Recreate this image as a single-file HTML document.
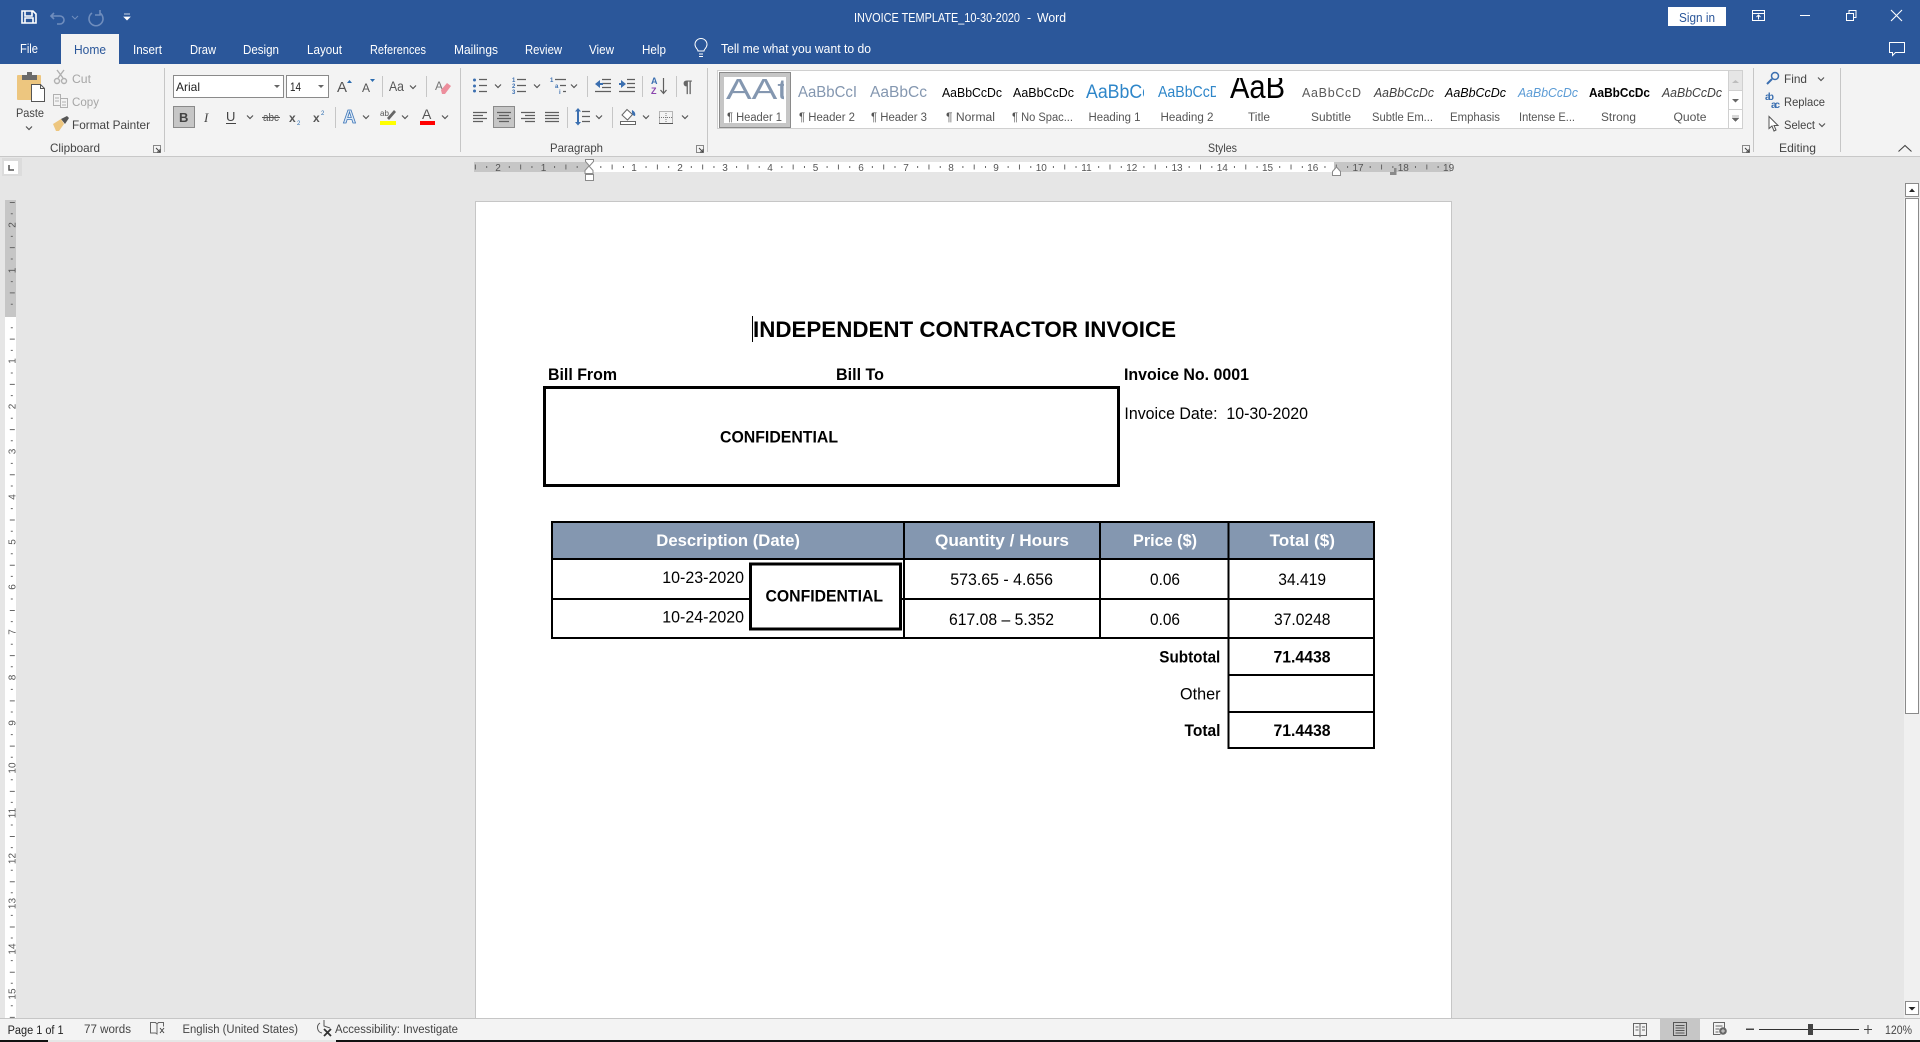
<!DOCTYPE html>
<html lang="en"><head><meta charset="utf-8"><title>INVOICE TEMPLATE_10-30-2020 - Word</title>
<style>
html,body{margin:0;padding:0;background:#e6e6e6;overflow:hidden}
svg{display:block;font-family:"Liberation Sans",sans-serif}
.r{font-size:12px;fill:#444}
.tab{font-size:12.5px;fill:#fff}
.lab{font-size:12px;fill:#444}
.dim{font-size:12px;fill:#a6a6a6}
.st{font-size:11.5px;fill:#555}
.rn{font-size:10px;fill:#555}
.sb{font-size:11.5px;fill:#444}
.b{font-weight:bold;fill:#000}
.doc{fill:#000}
.cal{font-size:17px;fill:#000}
.calb{font-size:17px;font-weight:bold;fill:#000}
.hd{font-size:17px;font-weight:bold;fill:#fff}
.ic{fill:none;stroke:#5f5f5f;stroke-width:1.2}
</style></head><body>
<svg width="1920" height="1042" viewBox="0 0 1920 1042" xmlns="http://www.w3.org/2000/svg">
<defs>
<path id="c" d="M-3-1.500l3 3 3-3" fill="none" stroke="#555" stroke-width="1.200"/>
<g id="l" fill="none" stroke="#666"><rect x=".5" y=".5" width="7" height="7" stroke="#888"/><path d="M3 3l4 4M7 4v3H4" stroke="#444"/></g>
<clipPath id="c1"><rect x="726" y="74" width="58" height="30"/></clipPath>
<clipPath id="c2"><rect x="1228" y="78" width="58" height="24"/></clipPath>
<clipPath id="c3"><rect x="1086" y="76" width="58" height="26"/></clipPath>
<clipPath id="c4"><rect x="1158" y="76" width="58" height="26"/></clipPath>
</defs>
<rect width="1920" height="1042" fill="#e6e6e6"/>

<!-- title bar -->
<rect width="1920" height="64" fill="#2b579a"/>
<path d="M22 11h11l3 3v9H22zM25 11v5h7v-5M25 23v-5h8v5" fill="none" stroke="#fff" stroke-width="1.600"/>
<path d="M54 13l-3 3 3 3M51 16h9a4 4 0 0 1 0 8h-3" fill="none" stroke="#6f8dbd" stroke-width="1.600"/>
<path d="M72 16l3 3 3-3" fill="none" stroke="#6f8dbd"/>
<path d="M92 13a7 7 0 1 0 8 0M100 10v5h-5" fill="none" stroke="#6f8dbd" stroke-width="1.600"/>
<path d="M124 14h6M124 17h6l-3 3z" fill="#fff" stroke="#fff" stroke-width=".7"/>
<text x="854" y="22" textLength="166" lengthAdjust="spacingAndGlyphs" font-size="12.500" fill="#fff">INVOICE TEMPLATE_10-30-2020</text>
<text x="1027" y="22" font-size="12.500" fill="#fff">-</text>
<text x="1037" y="22" textLength="29" lengthAdjust="spacingAndGlyphs" font-size="12.500" fill="#fff">Word</text>
<rect x="1668" y="7" width="58" height="19" fill="#fff"/>
<text x="1679" y="22" textLength="36" lengthAdjust="spacingAndGlyphs" font-size="12.500" fill="#2b579a">Sign in</text>
<path d="M1752.500 10.500h12v10h-12zM1752.500 13.500h12M1758.500 19.500v-4M1756.500 17l2-2 2 2" fill="none" stroke="#fff"/>
<path d="M1800 15.500h10" stroke="#fff"/>
<path d="M1846.500 13.500h7v7h-7zM1849 13v-2.500h7v7h-2" fill="none" stroke="#fff"/>
<path d="M1891 10l11 11M1902 10l-11 11" stroke="#fff" stroke-width="1.100"/>
<path d="M1889.500 42.500h15v10h-9l-3 3v-3h-3z" fill="none" stroke="#fff"/>

<!-- tabs -->
<text class="tab" x="20" y="53" textLength="18" lengthAdjust="spacingAndGlyphs">File</text>
<rect x="61" y="34" width="58" height="30" fill="#f3f3f3"/>
<text class="tab" x="74" y="54" textLength="32" lengthAdjust="spacingAndGlyphs" style="fill:#2b579a">Home</text>
<text class="tab" x="133" y="54" textLength="29" lengthAdjust="spacingAndGlyphs">Insert</text>
<text class="tab" x="190" y="54" textLength="26" lengthAdjust="spacingAndGlyphs">Draw</text>
<text class="tab" x="243" y="54" textLength="36" lengthAdjust="spacingAndGlyphs">Design</text>
<text class="tab" x="307" y="54" textLength="35" lengthAdjust="spacingAndGlyphs">Layout</text>
<text class="tab" x="370" y="54" textLength="56" lengthAdjust="spacingAndGlyphs">References</text>
<text class="tab" x="454" y="54" textLength="44" lengthAdjust="spacingAndGlyphs">Mailings</text>
<text class="tab" x="525" y="54" textLength="37" lengthAdjust="spacingAndGlyphs">Review</text>
<text class="tab" x="589" y="54" textLength="25" lengthAdjust="spacingAndGlyphs">View</text>
<text class="tab" x="642" y="54" textLength="24" lengthAdjust="spacingAndGlyphs">Help</text>
<path d="M699 54h4M699 56.500h4M698 51c0-2-3-3-3-6.500a6 6 0 0 1 12 0c0 3.500-3 4.500-3 6.500z" fill="none" stroke="#fff"/>
<text class="tab" x="721" y="53" textLength="150" lengthAdjust="spacingAndGlyphs">Tell me what you want to do</text>

<!-- ribbon -->
<rect y="64" width="1920" height="92" fill="#f3f3f3"/>
<rect y="156" width="1920" height="1" fill="#c8c8c8"/>
<g fill="#c6c6c6"><rect x="164" y="68" width="1" height="84"/><rect x="460" y="68" width="1" height="84"/><rect x="707" y="68" width="1" height="84"/><rect x="1753" y="68" width="1" height="84"/><rect x="1840" y="68" width="1" height="84"/></g>

<!-- clipboard -->
<rect x="17" y="75" width="24" height="25" rx="1" fill="#edc67f"/>
<rect x="22" y="75" width="15" height="5" fill="#6a6a6a"/><rect x="27" y="72" width="5" height="4" fill="#6a6a6a"/>
<path d="M31.500 84.500h9l4 4v13h-13z" fill="#fff" stroke="#555"/><path d="M40.500 84.500v4h4" fill="none" stroke="#555"/>
<text class="r" x="16" y="117" textLength="28" lengthAdjust="spacingAndGlyphs">Paste</text>
<use href="#c" x="29" y="128"/>
<g fill="none" stroke="#b0b0b0" stroke-width="1.400"><circle cx="57" cy="81" r="2.500"/><circle cx="64" cy="81" r="2.500"/><path d="M58 78l6-8M63 78l-6-8"/></g>
<text class="dim" x="72" y="83" textLength="19" lengthAdjust="spacingAndGlyphs">Cut</text>
<g fill="none" stroke="#b0b0b0"><path d="M53.500 94.500h7v11h-7zM60.500 98.500h7v9h-7z"/><path d="M55 98h4M55 101h4M62 102h4M62 105h4"/></g>
<text class="dim" x="72" y="106" textLength="27" lengthAdjust="spacingAndGlyphs">Copy</text>
<path d="M53 124l8-5 3 5-5 7h-3z" fill="#edc67f"/><path d="M61 119l6-3 2 2-4 6z" fill="#555"/>
<text class="r" x="72" y="129" textLength="78" lengthAdjust="spacingAndGlyphs">Format Painter</text>
<text class="lab" x="50" y="152" textLength="50" lengthAdjust="spacingAndGlyphs">Clipboard</text>
<use href="#l" x="153" y="145"/>

<!-- font -->
<rect x="173.500" y="75.500" width="110" height="22" fill="#fff" stroke="#8a8a8a"/>
<text class="r" x="176" y="91" textLength="24" lengthAdjust="spacingAndGlyphs" style="fill:#222">Arial</text>
<path d="M274 85h6l-3 3z" fill="#666"/>
<rect x="286.500" y="75.500" width="42" height="22" fill="#fff" stroke="#8a8a8a"/>
<text class="r" x="290" y="91" textLength="11" lengthAdjust="spacingAndGlyphs" style="fill:#222">14</text>
<path d="M318 85h6l-3 3z" fill="#666"/>
<text x="337" y="92" font-size="15" fill="#555">A</text><path d="M347 83l2.500-3 2.500 3z" fill="#2b6cb0"/>
<text x="362" y="92" font-size="12" fill="#555">A</text><path d="M370 79h5l-2.500 3z" fill="#2b6cb0"/>
<rect x="382" y="76" width="1" height="21" fill="#c6c6c6"/>
<text x="389" y="91" font-size="14" textLength="15" lengthAdjust="spacingAndGlyphs" fill="#555">Aa</text>
<use href="#c" x="413" y="87"/>
<rect x="426" y="76" width="1" height="21" fill="#c6c6c6"/>
<text x="435" y="90" font-size="12" fill="#777">A</text>
<path d="M441 90l6-7 4 3-6 8h-3z" fill="#ec8e9c"/>

<rect x="173.500" y="106.500" width="21" height="21" fill="#c6c6c6" stroke="#8a8a8a"/>
<text x="179" y="122" font-size="13" font-weight="bold" fill="#444">B</text>
<text x="204" y="122" font-size="13" font-style="italic" fill="#444" font-family="Liberation Serif">I</text>
<text x="226" y="121" font-size="13" fill="#444">U</text><rect x="226" y="123" width="10" height="1" fill="#444"/>
<use href="#c" x="250" y="117"/>
<text x="263" y="121" font-size="11" textLength="16" lengthAdjust="spacingAndGlyphs" fill="#555">abc</text><rect x="262" y="117" width="18" height="1" fill="#555"/>
<text x="289" y="122" font-size="12" font-weight="bold" fill="#555">x</text><text x="297" y="125" font-size="6" fill="#2b6cb0">2</text>
<text x="313" y="122" font-size="12" font-weight="bold" fill="#555">x</text><text x="321" y="115" font-size="6" fill="#2b6cb0">2</text>
<rect x="335" y="107" width="1" height="21" fill="#c6c6c6"/>
<text x="343" y="123" font-size="18" font-weight="bold" fill="#dbe8f6" stroke="#3d76b8" stroke-width=".8">A</text>
<use href="#c" x="366" y="117"/>
<path d="M387 118l7-8 2 2-7 8z" fill="#666"/><text x="380" y="116" font-size="8" fill="#555">ab</text>
<rect x="380" y="121" width="16" height="4" fill="#ff0"/>
<use href="#c" x="405" y="117"/>
<text x="422" y="119" font-size="14" fill="#555">A</text>
<rect x="420" y="121" width="15" height="4" fill="#f00"/>
<use href="#c" x="445" y="117"/>

<!-- paragraph -->
<g fill="#3b6fb0"><circle cx="474.500" cy="80" r="1.500"/><circle cx="474.500" cy="86" r="1.500"/><circle cx="474.500" cy="91" r="1.500"/></g>
<path class="ic" d="M479 79.500h8M479 85.500h8M479 91.500h8"/>
<use href="#c" x="498" y="86"/>
<g font-size="6" font-weight="bold" fill="#3b6fb0"><text x="512" y="82">1</text><text x="512" y="88">2</text><text x="512" y="94">3</text></g>
<path class="ic" d="M517 79.500h9M517 85.500h9M517 91.500h9"/>
<use href="#c" x="537" y="86"/>
<g font-size="6" font-weight="bold" fill="#3b6fb0"><text x="550" y="82">1</text><text x="555" y="88">a</text><text x="559" y="94">i</text></g>
<path class="ic" d="M555 79.500h11M560 85.500h6M563 91.500h3"/>
<use href="#c" x="574" y="86"/>
<rect x="587" y="76" width="1" height="21" fill="#c6c6c6"/>
<path class="ic" d="M602 79.500h9M602 83.500h9M602 87.500h9M595 91.500h16"/><path d="M595 84l5-4v3h3v2h-3v3z" fill="#3b6fb0"/>
<path class="ic" d="M627 79.500h8M627 83.500h8M627 87.500h8M619 91.500h16"/><path d="M626 84l-5-4v3h-2v2h2v3z" fill="#3b6fb0"/>
<rect x="642" y="76" width="1" height="21" fill="#c6c6c6"/>
<text x="651" y="84" font-size="9" font-weight="bold" fill="#3b6fb0">A</text><text x="651" y="94" font-size="9" font-weight="bold" fill="#8a44ad">Z</text>
<path class="ic" d="M663.500 78v15M660.500 90l3 3.500 3-3.500"/>
<rect x="676" y="76" width="1" height="21" fill="#c6c6c6"/>
<text x="683" y="92" font-size="17" font-weight="bold" fill="#666">¶</text>

<path class="ic" d="M473 112.500h14M473 115.500h10M473 118.500h14M473 121.500h10"/>
<rect x="493.500" y="106.500" width="21" height="21" fill="#c6c6c6" stroke="#8a8a8a"/>
<path class="ic" d="M497 112.500h14M499 115.500h10M497 118.500h14M499 121.500h10"/>
<path class="ic" d="M521 112.500h14M525 115.500h10M521 118.500h14M525 121.500h10"/>
<path class="ic" d="M545 112.500h14M545 115.500h14M545 118.500h14M545 121.500h14"/>
<rect x="567" y="107" width="1" height="21" fill="#c6c6c6"/>
<path class="ic" d="M582 111.500h8M582 116.500h8M582 121.500h8"/>
<path d="M578 108l-3 3.500h2V122h-2l3 3.500 3-3.500h-2v-10.500h2z" fill="#3b6fb0"/>
<use href="#c" x="599" y="117"/>
<rect x="612" y="107" width="1" height="21" fill="#c6c6c6"/>
<path d="M622 115l5-5.500 5.500 5-5 5.500z" fill="#fff" stroke="#666"/><rect x="620.500" y="121.500" width="15" height="3" fill="#fff" stroke="#666"/><path d="M632 110c2 1 4 3 3 6-2 0-3.500-2-3-6z" fill="#3b6fb0"/>
<use href="#c" x="646" y="117"/>
<path d="M659.500 111.500h13v12h-13z" fill="none" stroke="#777" stroke-dasharray="1 1"/><path d="M659 117.500h14M666 111v12" stroke="#777" stroke-dasharray="1 1"/><path d="M659 123.500h14" stroke="#555"/>
<use href="#c" x="685" y="117"/>
<text class="lab" x="550" y="152" textLength="53" lengthAdjust="spacingAndGlyphs">Paragraph</text>
<use href="#l" x="696" y="145"/>

<!-- styles gallery -->
<rect x="717.500" y="70.500" width="1025" height="58" fill="#fff" stroke="#d0d0d0"/>
<rect x="719.500" y="72.500" width="71" height="55" fill="#fff" stroke="#8a8a8a"/>
<rect x="722" y="75" width="66" height="50" fill="none" stroke="#c6c6c6" stroke-width="4"/>
<text x="726" y="99" font-size="29" textLength="62" lengthAdjust="spacingAndGlyphs" fill="#8497b0" clip-path="url(#c1)">AAt</text>
<g font-size="15.500" fill="#8497b0"><text x="798" y="97" textLength="59" lengthAdjust="spacingAndGlyphs">AaBbCcI</text><text x="870" y="97" textLength="57" lengthAdjust="spacingAndGlyphs">AaBbCc</text></g>
<g font-size="13" fill="#000"><text x="942" y="97" textLength="60" lengthAdjust="spacingAndGlyphs">AaBbCcDc</text><text x="1013" y="97" textLength="61" lengthAdjust="spacingAndGlyphs">AaBbCcDc</text></g>
<text x="1086" y="98" font-size="19" textLength="65" lengthAdjust="spacingAndGlyphs" fill="#2e86c9" clip-path="url(#c3)">AaBbCc</text>
<text x="1158" y="97" textLength="62" lengthAdjust="spacingAndGlyphs" font-size="16" fill="#2e86c9" clip-path="url(#c4)">AaBbCcD</text>
<text x="1230" y="98" font-size="33" textLength="55" lengthAdjust="spacingAndGlyphs" fill="#000" clip-path="url(#c2)">AaB</text>
<text x="1302" y="97" textLength="59" lengthAdjust="spacing" font-size="12.500" fill="#5a5a5a">AaBbCcD</text>
<g font-size="13" font-style="italic"><text x="1374" y="97" textLength="60" lengthAdjust="spacingAndGlyphs" fill="#404040">AaBbCcDc</text><text x="1445" y="97" textLength="61" lengthAdjust="spacingAndGlyphs" fill="#000">AaBbCcDc</text><text x="1518" y="97" textLength="60" lengthAdjust="spacingAndGlyphs" fill="#5b9bd5">AaBbCcDc</text><text x="1662" y="97" textLength="60" lengthAdjust="spacingAndGlyphs" fill="#404040">AaBbCcDc</text></g>
<text x="1589" y="97" textLength="61" lengthAdjust="spacingAndGlyphs" font-size="13" font-weight="bold" fill="#000">AaBbCcDc</text>
<text class="st" x="727" y="121" textLength="55" lengthAdjust="spacingAndGlyphs">¶ Header 1</text>
<text class="st" x="799" y="121" textLength="56" lengthAdjust="spacingAndGlyphs">¶ Header 2</text>
<text class="st" x="871" y="121" textLength="56" lengthAdjust="spacingAndGlyphs">¶ Header 3</text>
<text class="st" x="946" y="121" textLength="49" lengthAdjust="spacingAndGlyphs">¶ Normal</text>
<text class="st" x="1012" y="121" textLength="61" lengthAdjust="spacingAndGlyphs">¶ No Spac...</text>
<text class="st" x="1088.500" y="121" textLength="52" lengthAdjust="spacingAndGlyphs">Heading 1</text>
<text class="st" x="1160.500" y="121" textLength="53" lengthAdjust="spacingAndGlyphs">Heading 2</text>
<text class="st" x="1248" y="121" textLength="22" lengthAdjust="spacingAndGlyphs">Title</text>
<text class="st" x="1311" y="121" textLength="40" lengthAdjust="spacingAndGlyphs">Subtitle</text>
<text class="st" x="1372" y="121" textLength="61" lengthAdjust="spacingAndGlyphs">Subtle Em...</text>
<text class="st" x="1450" y="121" textLength="50" lengthAdjust="spacingAndGlyphs">Emphasis</text>
<text class="st" x="1519" y="121" textLength="56" lengthAdjust="spacingAndGlyphs">Intense E...</text>
<text class="st" x="1601" y="121" textLength="35" lengthAdjust="spacingAndGlyphs">Strong</text>
<text class="st" x="1673.500" y="121" textLength="33" lengthAdjust="spacingAndGlyphs">Quote</text>
<rect x="1728.500" y="70.500" width="14" height="20" fill="#e6e6e6" stroke="#d0d0d0"/>
<rect x="1728.500" y="90.500" width="14" height="19" fill="#fff" stroke="#d0d0d0"/>
<rect x="1728.500" y="109.500" width="14" height="19" fill="#fff" stroke="#d0d0d0"/>
<path d="M1732 83l3.500-3 3.500 3z" fill="#bdbdbd"/>
<path d="M1732 99h7l-3.500 3.500z" fill="#666"/>
<path d="M1732 116h7M1732 118h7l-3.500 3.500z" fill="#666" stroke="#666" stroke-width=".5"/>
<text class="lab" x="1208" y="152" textLength="29" lengthAdjust="spacingAndGlyphs">Styles</text>
<use href="#l" x="1742" y="145"/>

<!-- editing -->
<circle cx="1775" cy="76" r="3.500" fill="none" stroke="#3b6fb0" stroke-width="1.500"/><path d="M1772 79l-5 5" stroke="#3b6fb0" stroke-width="2"/>
<text class="r" x="1784" y="83" textLength="23" lengthAdjust="spacingAndGlyphs">Find</text><use href="#c" x="1821" y="79"/>
<text x="1765" y="100" font-size="10" font-weight="bold" fill="#3b6fb0" textLength="9">ab</text><text x="1771" y="108" font-size="10" font-weight="bold" fill="#3b6fb0" textLength="9">ac</text>
<text class="r" x="1784" y="106" textLength="41" lengthAdjust="spacingAndGlyphs">Replace</text>
<path d="M1769 116.500v12l3-2.500 2 5 2-1-2-4.500h4z" fill="#fff" stroke="#555"/>
<text class="r" x="1784" y="129" textLength="31" lengthAdjust="spacingAndGlyphs">Select</text><use href="#c" x="1822" y="125"/>
<text class="lab" x="1779" y="152" textLength="37" lengthAdjust="spacingAndGlyphs">Editing</text>
<path d="M1898.500 151.500l6.500-6 6.500 6" fill="none" stroke="#444" stroke-width="1.100"/>

<!-- corner -->
<rect x="2" y="158" width="20" height="18" fill="#dcdcdc"/>
<rect x="4" y="161" width="14" height="13" fill="#fff"/>
<path d="M9 165v5h5" fill="none" stroke="#555" stroke-width="1.500"/>

<!-- horizontal ruler -->
<rect x="474" y="162" width="115" height="10" fill="#c6c6c6"/>
<rect x="589" y="162" width="745" height="10" fill="#fff"/>
<rect x="1334" y="162" width="117" height="10" fill="#c6c6c6"/>
<path d="M600.300 167H1450" stroke="#666" stroke-width="2" stroke-dasharray="1 21.630"/>
<path d="M611.630 167H1450" stroke="#666" stroke-width="5" stroke-dasharray="1 44.260"/>
<path d="M577.700 167H474" stroke="#666" stroke-width="2" stroke-dasharray="1 21.630"/>
<path d="M566.400 167H474" stroke="#666" stroke-width="5" stroke-dasharray="1 44.260"/>
<g class="rn" text-anchor="middle">
<text x="498" y="171">2</text><text x="543.500" y="171">1</text>
<text x="634" y="171">1</text><text x="680" y="171">2</text><text x="725" y="171">3</text><text x="770" y="171">4</text><text x="815.500" y="171">5</text><text x="861" y="171">6</text><text x="906" y="171">7</text><text x="951" y="171">8</text><text x="996" y="171">9</text><text x="1041.300" y="171">10</text><text x="1086.500" y="171">11</text><text x="1131.800" y="171">12</text><text x="1177" y="171">13</text><text x="1222.300" y="171">14</text><text x="1267.500" y="171">15</text><text x="1312.800" y="171">16</text><text x="1358" y="171">17</text><text x="1403.300" y="171">18</text><text x="1448.600" y="171">19</text>
</g>
<path d="M585.500 159.500h8v2l-4 4.500-4-4.500zM589 166l4 4.500v3h-8v-3zM585.500 174.500h8v6h-8z" fill="#fff" stroke="#8a8a8a"/>
<path d="M1340.500 171.500v4h-8v-4l4-4.500z" fill="#fff" stroke="#8a8a8a"/>
<path d="M1394 168h2.500v7H1390v-3h4z" fill="#8a8a8a"/>

<!-- vertical ruler -->
<rect x="5" y="200" width="11" height="117" fill="#c6c6c6"/>
<rect x="5" y="317" width="11" height="701" fill="#fff"/>
<path d="M11.800 327.300V1018" stroke="#666" stroke-width="2" stroke-dasharray="1 21.600"/>
<path d="M12.300 338.630V1018" stroke="#666" stroke-width="5" stroke-dasharray="1 44.220"/>
<path d="M11.800 304.700V200" stroke="#666" stroke-width="2" stroke-dasharray="1 21.600"/>
<path d="M12.300 293.400V200" stroke="#666" stroke-width="5" stroke-dasharray="1 44.220"/>
<g class="rn" text-anchor="middle">
<text transform="translate(15.500 225) rotate(-90)">2</text><text transform="translate(15.500 270.500) rotate(-90)">1</text>
<text transform="translate(15.500 361) rotate(-90)">1</text><text transform="translate(15.500 406.500) rotate(-90)">2</text><text transform="translate(15.500 451.500) rotate(-90)">3</text><text transform="translate(15.500 497) rotate(-90)">4</text><text transform="translate(15.500 542) rotate(-90)">5</text><text transform="translate(15.500 587) rotate(-90)">6</text><text transform="translate(15.500 632) rotate(-90)">7</text><text transform="translate(15.500 677.500) rotate(-90)">8</text><text transform="translate(15.500 723) rotate(-90)">9</text><text transform="translate(15.500 768) rotate(-90)">10</text><text transform="translate(15.500 813) rotate(-90)">11</text><text transform="translate(15.500 858.500) rotate(-90)">12</text><text transform="translate(15.500 903.500) rotate(-90)">13</text><text transform="translate(15.500 949) rotate(-90)">14</text><text transform="translate(15.500 994) rotate(-90)">15</text>
</g>

<!-- page -->
<rect x="475.500" y="201.500" width="976" height="860" fill="#fff" stroke="#c6c6c6"/>
<rect x="752" y="316" width="1" height="26" fill="#000"/>
<text class="b" x="753" y="337" font-size="22.400" textLength="423" lengthAdjust="spacingAndGlyphs">INDEPENDENT CONTRACTOR INVOICE</text>
<text class="b" x="548" y="380" font-size="17" textLength="69" lengthAdjust="spacingAndGlyphs">Bill From</text>
<text class="b" x="836" y="380" font-size="17" textLength="48" lengthAdjust="spacingAndGlyphs">Bill To</text>
<text class="b" x="1124" y="380" font-size="17" textLength="125" lengthAdjust="spacingAndGlyphs">Invoice No. 0001</text>
<text class="doc" x="1124.400" y="419" font-size="17" textLength="183.600" lengthAdjust="spacingAndGlyphs" xml:space="preserve">Invoice Date:  10-30-2020</text>
<rect x="544.500" y="387.500" width="574" height="98" fill="#fff" stroke="#000" stroke-width="3"/>
<text class="calb" x="720" y="442.500" textLength="118" lengthAdjust="spacingAndGlyphs">CONFIDENTIAL</text>

<!-- table -->
<rect x="551" y="521" width="823" height="38" fill="#8497b0"/>
<g stroke="#000" stroke-width="2" fill="none">
<path d="M551 522H1375M551 559H1375M551 599H1375M551 638H1375"/>
<path d="M552 521V639M904 521V639M1100 521V639M1228.500 521V749M1374 521V749"/>
<path d="M1228 675H1375M1228 712H1375M1228 748H1375"/>
</g>
<text class="hd" x="656.300" y="546" textLength="143.700" lengthAdjust="spacingAndGlyphs">Description (Date)</text>
<text class="hd" x="935" y="546" textLength="134" lengthAdjust="spacingAndGlyphs">Quantity / Hours</text>
<text class="hd" x="1133" y="546" textLength="64" lengthAdjust="spacingAndGlyphs">Price ($)</text>
<text class="hd" x="1269.600" y="546" textLength="65.400" lengthAdjust="spacingAndGlyphs">Total ($)</text>
<text class="cal" x="662.300" y="583" textLength="81.700" lengthAdjust="spacingAndGlyphs">10-23-2020</text>
<text class="cal" x="662.300" y="622.500" textLength="81.700" lengthAdjust="spacingAndGlyphs">10-24-2020</text>
<rect x="750.500" y="564" width="150" height="65" fill="#fff" stroke="#000" stroke-width="3"/>
<text class="calb" x="765.500" y="601.500" textLength="117.500" lengthAdjust="spacingAndGlyphs">CONFIDENTIAL</text>
<text class="cal" x="950.300" y="585" textLength="102.700" lengthAdjust="spacingAndGlyphs">573.65 - 4.656</text>
<text class="cal" x="949" y="625" textLength="105" lengthAdjust="spacingAndGlyphs">617.08 – 5.352</text>
<text class="cal" x="1150" y="585" textLength="30" lengthAdjust="spacingAndGlyphs">0.06</text>
<text class="cal" x="1150" y="625" textLength="30" lengthAdjust="spacingAndGlyphs">0.06</text>
<text class="cal" x="1278.300" y="585" textLength="47.700" lengthAdjust="spacingAndGlyphs">34.419</text>
<text class="cal" x="1274" y="625" textLength="56.500" lengthAdjust="spacingAndGlyphs">37.0248</text>
<text class="calb" x="1159.300" y="662.700" textLength="61" lengthAdjust="spacingAndGlyphs">Subtotal</text>
<text class="calb" x="1273.500" y="662.700" textLength="57" lengthAdjust="spacingAndGlyphs">71.4438</text>
<text class="cal" x="1180" y="699.700" textLength="40.500" lengthAdjust="spacingAndGlyphs">Other</text>
<text class="calb" x="1184.500" y="736" textLength="36" lengthAdjust="spacingAndGlyphs">Total</text>
<text class="calb" x="1273.500" y="736" textLength="57" lengthAdjust="spacingAndGlyphs">71.4438</text>

<!-- scrollbar -->
<rect x="1904" y="157" width="16" height="861" fill="#e6e6e6"/>
<rect x="1904" y="198" width="16" height="820" fill="#f0f0f0"/>
<rect x="1905.500" y="183.500" width="13" height="13" fill="#fff" stroke="#8a8a8a"/>
<path d="M1909 192l3-3.500 3 3.500z" fill="#222"/>
<rect x="1905.500" y="198.500" width="13" height="515" fill="#fff" stroke="#8a8a8a"/>
<rect x="1905.500" y="1001.500" width="13" height="13" fill="#fff" stroke="#8a8a8a"/>
<path d="M1908.500 1007h7l-3.500 3.500z" fill="#222"/>

<!-- status bar -->
<rect y="1018" width="1920" height="22" fill="#f3f3f3"/>
<rect y="1018" width="1920" height="1" fill="#c6c6c6"/>
<rect y="1040" width="1920" height="2" fill="#111"/>
<rect x="48" y="1040" width="288" height="2" fill="#e6e6e6"/>
<text class="sb" x="7.600" y="1034" textLength="56" lengthAdjust="spacingAndGlyphs" style="fill:#222">Page 1 of 1</text>
<text class="sb" x="84" y="1033" textLength="47" lengthAdjust="spacingAndGlyphs">77 words</text>
<path d="M150.500 1022.500h5l1.500 1.500v10l-1.500-1h-5zM157 1024l1.500-1.500h5v4" fill="none" stroke="#666"/><path d="M160 1028l4 5M164 1028l-4 5" stroke="#444"/>
<text class="sb" x="182.500" y="1033" textLength="115.500" lengthAdjust="spacingAndGlyphs">English (United States)</text>
<path d="M320 1023a5.500 5.500 0 0 0 2 10M324 1020v6l6 2" fill="none" stroke="#555"/><path d="M324 1029l7 7M331 1029l-7 7" stroke="#333" stroke-width="1.800"/>
<text class="sb" x="335" y="1033" textLength="123" lengthAdjust="spacingAndGlyphs">Accessibility: Investigate</text>
<path d="M1633.500 1023.500h6l.500 1 .500-1h6v12h-6l-.500 1-.500-1h-6zM1640 1024v11M1635.500 1027h3M1635.500 1030h3M1642 1027h3M1642 1030h3" fill="none" stroke="#666"/>
<rect x="1660" y="1019" width="40" height="21" fill="#c6c6c6"/>
<path d="M1673.500 1022.500h13v13h-13zM1675.500 1025.500h9M1675.500 1028h9M1675.500 1030.500h9M1675.500 1033h9" fill="none" stroke="#555"/>
<path d="M1713.500 1022.500h11v6M1713.500 1022.500v12h7M1715.500 1026h7M1715.500 1029h4M1715.500 1032h3" fill="none" stroke="#666"/><circle cx="1723" cy="1031" r="3.800" fill="#666"/><path d="M1721 1031h4M1723 1029v4" stroke="#f3f3f3" stroke-width=".7"/>
<rect x="1746" y="1028.500" width="8" height="1.500" fill="#444"/>
<rect x="1759" y="1029" width="100" height="1" fill="#333"/>
<rect x="1808" y="1024" width="5" height="11" fill="#444"/>
<path d="M1868 1025v9M1864 1029.500h8" stroke="#444"/>
<text class="sb" x="1885" y="1034" textLength="27" lengthAdjust="spacingAndGlyphs">120%</text>
</svg>
</body></html>
